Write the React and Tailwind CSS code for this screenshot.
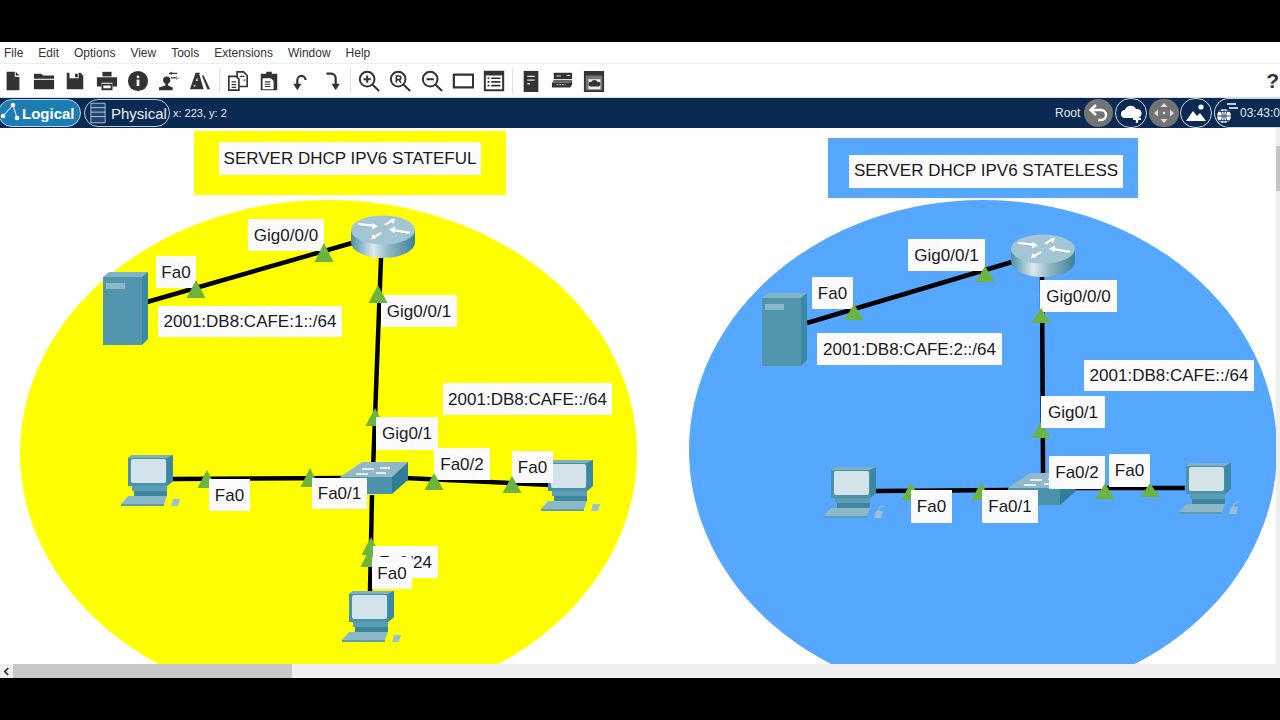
import React from 'react';

const ink = '#333333';

const toolIcons = {
  file: <path d="M5 2h9l-.2 5.400L19 7.500V22H5zM15 2l4 4h-4z" fill={ink} />,
  folder: (
    <g fill={ink}>
      <path d="M1 4h8l2 2h12v3.500H1z" />
      <path d="M1 10.700h22V21H1z" />
    </g>
  ),
  save: <path fillRule="evenodd" fill={ink} d="M3 3h3v6h10V3h2l3 3v15H3zM12 4h3v4h-3z" />,
  print: (
    <g fill={ink}>
      <path d="M7 2h10v5H7z" />
      <path fillRule="evenodd" d="M1 8h22v10h-5v-4H6v4H1z" />
      <path fillRule="evenodd" d="M6 15h12v7H6zM8 17v3h8v-3z" />
    </g>
  ),
  info: (
    <g>
      <circle cx="12" cy="12" r="11" fill={ink} />
      <circle cx="12" cy="7.500" r="1.500" fill="#fff" />
      <path d="M10.500 10.500h3v7h-3z" fill="#fff" />
    </g>
  ),
  user: (
    <g fill={ink}>
      <circle cx="9.500" cy="11" r="4" />
      <path d="M8 14h3v3l5 2v3H1v-3l7-2z" />
      <path d="M12 3h9v1.400h-9zM12 3.700l3-2v4zM14 8h8v1.400h-8zM23 8.700l-3-2v4z" />
    </g>
  ),
  flask: (
    <g fill={ink}>
      <path fillRule="evenodd" d="M7 3h5l-.8 1.500L16 21H1L6.600 4.500zM8.500 9l-1 3h2l-.3-3zM6 16a1 1 0 1 0 .1 0z" />
      <path d="M14 6h2l7 15h-3z" />
    </g>
  ),
  copy: (
    <g fill="#fff" stroke={ink} strokeWidth="1.800">
      <path d="M11 2h7l4 4v12h-11z" />
      <path d="M2 7h8l3 3v12H2z" />
      <path d="M5 13h5M5 16h5M5 19h5M14 7h5M18 11h2" strokeWidth="1.200" />
    </g>
  ),
  paste: (
    <g>
      <path d="M3 4h6V2h6v2h6v18H3z" fill={ink} />
      <path d="M5 9h9l3 3v9H5z" fill="#fff" />
      <path d="M7.500 13h6M7.500 15.500h6M7.500 18h6" stroke={ink} strokeWidth="1.200" />
    </g>
  ),
  undo: (
    <g>
      <path d="M17 11a4.500 4.500 0 0 0-9 0v6" fill="none" stroke={ink} strokeWidth="2.400" />
      <path d="M3.500 15h9L8 22z" fill={ink} />
    </g>
  ),
  redo: (
    <g>
      <path d="M6 4h5a5 5 0 0 1 5 5v8" fill="none" stroke={ink} strokeWidth="2.400" />
      <path d="M11.500 15h9L16 22z" fill={ink} />
    </g>
  ),
  zoomIn: (
    <g fill="none" stroke={ink} strokeWidth="2.200">
      <circle cx="10" cy="10" r="8" />
      <path d="M16 16l7 7M6 10h8M10 6v8" />
    </g>
  ),
  zoomReset: (
    <g fill="none" stroke={ink} strokeWidth="2.200">
      <circle cx="10" cy="10" r="8" />
      <path d="M16 16l7 7" />
      <path d="M8 14V6.500h3a2 2 0 0 1 0 4H8M11 10.500l2 3.500" strokeWidth="1.700" />
    </g>
  ),
  zoomOut: (
    <g fill="none" stroke={ink} strokeWidth="2.200">
      <circle cx="10" cy="10" r="8" />
      <path d="M16 16l7 7M6 10h8" />
    </g>
  ),
  rect: <path d="M2 5h21v14H2z" fill="none" stroke={ink} strokeWidth="2.400" />,
  list: (
    <g>
      <path d="M2 2h20v20H2z" fill="none" stroke={ink} strokeWidth="2.200" />
      <path d="M2 2h20v4H2z" fill={ink} />
      <path d="M5 9h2M9 9h10M5 13h2M9 13h10M5 17h2M9 17h10" stroke={ink} strokeWidth="1.800" />
    </g>
  ),
  server: (
    <g>
      <path d="M4 1h16v23H4z" fill={ink} />
      <path d="M8 7h8M8 11h8M8 15h3" stroke="#ddd" strokeWidth="1.500" />
    </g>
  ),
  switchBox: (
    <g>
      <path d="M3 3h20v7H3z" fill={ink} />
      <path d="M6 6.500h5M17 6h4" stroke="#ddd" strokeWidth="1.200" />
      <path d="M3 11h20l-2 3H1z" fill="#666" />
      <path d="M1 14h20l2-3v5l-2 3H1z" fill={ink} />
      <path d="M6 16h10" stroke="#aaa" strokeWidth="1.200" strokeDasharray="2 1" />
    </g>
  ),
  cloudBox: (
    <g>
      <path d="M2 2h20v21H2z" fill="#777" stroke={ink} strokeWidth="2" />
      <path d="M2 2h20v4H2z" fill={ink} />
      <path d="M6 10h13v11H6z" fill="#eee" />
      <path d="M8 18a2.500 2.500 0 0 1 1-5 4 4 0 0 1 7 0 2.500 2.500 0 0 1 1 5z" fill={ink} />
    </g>
  ),
};

const ToolIcon = ({ name }) => (
  <div className="w-[31.3px] flex justify-center">
    <svg viewBox="0 0 24 24" className="w-[22px] h-[22px]">{toolIcons[name]}</svg>
  </div>
);

const Sep = () => <div className="w-px h-[26px] bg-[#e2e2e2]" />;

const PillIcon = ({ children, gray }) => (
  <div className={gray
    ? 'w-[30px] h-[28px] rounded-full bg-[#737373] flex items-center justify-center'
    : 'w-[32px] h-[30px] rounded-full border border-[#c9d6e4] flex items-center justify-center'}>
    <svg viewBox="0 0 24 24" className="w-[24px] h-[24px]">{children}</svg>
  </div>
);

const Pc = ({ x, y }) => (
  <g transform={`translate(${x} ${y})`}>
    <path d="M8 3l4-3h41v26l-6 5H8z" fill="#4b93ab" />
    <path d="M8 3l4-3h41l-6 3z" fill="#7fb1c3" />
    <path d="M47 3l6-3v26l-6 5z" fill="#3a88a2" />
    <path d="M11 6q0-2 2-2h31q2 0 2 2v20q0 2-2 2H13q-2 0-2-2z" fill="#d4e2ea" />
    <path d="M12 31h35v5H12z" fill="#5c9db3" />
    <path d="M14 36h33v5H14z" fill="#3f879f" />
    <path d="M8 41h39l-3 8H1z" fill="#8db8c8" />
    <path d="M1 49h43v2H1z" fill="#5c9db3" />
    <path d="M53 44h7l-2 7h-7z" fill="#9cc0cf" />
    <path d="M55 44q2-6 6-5" fill="none" stroke="#d8d8a0" strokeWidth="0.800" />
  </g>
);

const ServerBox = ({ x, y }) => (
  <g transform={`translate(${x} ${y})`}>
    <path d="M0 5h39v68H0z" fill="#5195af" />
    <path d="M0 5l6-5h39l-6 5z" fill="#80b3c5" />
    <path d="M39 5l6-5v67l-6 6z" fill="#3a88a2" />
    <path d="M3 11h19v6H3z" fill="#8cb5c6" />
  </g>
);

const Router = ({ x, y, id }) => (
  <g transform={`translate(${x} ${y})`}>
    <defs>
      <linearGradient id={id} x1="0" x2="1" y1="0" y2="0">
        <stop offset="0" stopColor="#4d8fa6" />
        <stop offset="0.35" stopColor="#dbe9ee" />
        <stop offset="0.6" stopColor="#8fb6c5" />
        <stop offset="1" stopColor="#3f8097" />
      </linearGradient>
    </defs>
    <path d="M0 15v12c0 9 14 16 32 16s32-7 32-16V15z" fill={`url(#${id})`} />
    <ellipse cx="32" cy="15" rx="32" ry="14.500" fill="#a3c5d4" />
    <g stroke="#5a8296" strokeWidth="1" transform="translate(0 1)">
      <path d="M7 9l17 2M34 10l8-5M22 23l8-5M41 15l18 3" />
    </g>
    <g stroke="#fff" strokeWidth="2.400" fill="none">
      <path d="M7 9l17 2M34 10l8-5M22 23l8-5M41 15l18 3" />
    </g>
    <g fill="#fff">
      <path d="M27 11.500l-6 3 .6-6.500zM44 3.500l-1.500 5.500-4-4zM20 24.500l1.500-5.500 4 4zM38 14.500l6-3-.6 6.500z" />
    </g>
  </g>
);

const SwitchBox = ({ x, y }) => (
  <g transform={`translate(${x} ${y})`}>
    <path d="M0 17L22 2h46L52 17z" fill="#92b9c8" />
    <path d="M0 17h52v17H0z" fill="#4b93ab" />
    <path d="M52 17L68 2v18L52 34z" fill="#2f7d96" />
    <path d="M22 9h12M40 8h10M16 14h12M36 13h10" stroke="#fff" strokeWidth="1.500" />
  </g>
);

// link lines, page coordinates
const links = [
  [147, 302, 352, 243], [381, 258, 373, 470], [172, 479, 342, 478], [405, 478, 550, 485], [372, 495, 370, 592],
  [807, 323, 1012, 262], [1042, 275, 1043, 475], [875, 491, 1012, 490], [1075, 488, 1185, 488],
];

// link lights [x centre, apex y, base y]; the ones in `under` sit below the labels
const under = [
  [375, 408, 426], [207, 470, 488], [310, 468, 487], [371, 537, 555], [370, 548, 567],
  [1041, 422, 438], [911, 482, 500], [981, 482, 500],
];
const over = [
  [196, 280, 298], [324, 243, 262], [378, 285, 303], [434, 473, 490], [512, 476, 493],
  [854, 304, 320], [985, 266, 282], [1041, 308, 323], [1105, 483, 499], [1150, 483, 497],
];

const Lights = ({ items }) => (
  <svg viewBox="0 128 1280 536" className="absolute inset-0 w-[1280px] h-[536px] pointer-events-none">
    {items.map(([cx, a, b], i) => (
      <path key={i} d={`M${cx} ${a}L${cx + 9.5} ${b}H${cx - 9.5}z`} fill="#6cb33f" />
    ))}
  </svg>
);

const Note = ({ className, children, right }) => (
  <div className={`absolute bg-[#fbfbfd] flex items-center text-[17px] leading-none text-[#1a1a1a] whitespace-nowrap ${right ? 'justify-end pr-[6px]' : 'justify-center'} ${className}`}>
    {children}
  </div>
);

export default function App() {
  return (
    <div className="w-[1280px] h-[720px] overflow-hidden bg-black pt-[42px] flex flex-col font-['Liberation_Sans',Arial,sans-serif]">
      <div className="h-[21px] bg-white flex items-center gap-[15px] px-1 text-[12px] text-[#333]">
        {['File', 'Edit', 'Options', 'View', 'Tools', 'Extensions', 'Window', 'Help'].map((m) => (
          <span key={m}>{m}</span>
        ))}
      </div>

      <div className="h-[34px] bg-white flex items-center border-t border-[#eeeeee]">
        <div className="flex items-center ml-[-3px]">
          {['file', 'folder', 'save', 'print', 'info', 'user', 'flask'].map((n) => <ToolIcon key={n} name={n} />)}
        </div>
        <div className="ml-[3px]"><Sep /></div>
        <div className="flex items-center ml-[2.400px]">
          {['copy', 'paste', 'undo', 'redo'].map((n) => <ToolIcon key={n} name={n} />)}
        </div>
        <div className="ml-[2.400px]"><Sep /></div>
        <div className="flex items-center ml-[2.400px]">
          {['zoomIn', 'zoomReset', 'zoomOut', 'rect', 'list'].map((n) => <ToolIcon key={n} name={n} />)}
        </div>
        <div className="ml-[2px]"><Sep /></div>
        <div className="flex items-center ml-[2.400px]">
          {['server', 'switchBox', 'cloudBox'].map((n) => <ToolIcon key={n} name={n} />)}
        </div>
        <span className="ml-auto mr-[1px] text-[21px] font-bold text-[#333]">?</span>
      </div>

      <div className="h-[31px] bg-[#0b2a52] flex items-center border-t border-[#d8dde6] overflow-hidden">
        <div className="ml-[-2px] w-[83px] h-[28px] rounded-full bg-[#1b7db4] border border-[#b9d6e8] flex items-center">
          <svg viewBox="0 0 22 22" className="w-[22px] h-[22px] ml-[1px] shrink-0">
            <path d="M3 14L13 3l4 13" fill="none" stroke="#d6e8f3" strokeWidth="1.100" />
            <circle cx="3" cy="14" r="2.300" fill="#fff" />
            <circle cx="13" cy="3" r="2.300" fill="#fff" />
            <circle cx="17" cy="16" r="2.300" fill="#fff" />
          </svg>
          <span className="text-white font-bold text-[15px] leading-none">Logical</span>
        </div>
        <div className="ml-[3px] w-[86px] h-[28px] rounded-full border border-[#b9cfe2] flex items-center">
          <svg viewBox="0 0 18 24" className="w-[16px] h-[22px] ml-[5px] shrink-0">
            <path d="M1 1h16v22H1zM1 6h16M1 11h16M1 16h16" fill="#23466f" stroke="#b9cfe2" strokeWidth="1" />
          </svg>
          <span className="ml-[5px] text-[#e8eef5] text-[15px] leading-none">Physical</span>
        </div>
        <span className="ml-[3px] text-[11px] text-[#e3e8ef]">x: 223, y: 2</span>
        <div className="ml-auto flex items-center shrink-0 w-[225px]">
          <span className="text-[12px] text-[#e3e8ef] w-[30px]">Root</span>
          <PillIcon gray>
            <path d="M9 4L3.500 9 9 14M4 9h10a5 5 0 0 1 0 10h-3" fill="none" stroke="#fff" strokeWidth="2.400" />
          </PillIcon>
          <div className="ml-[2px]">
            <PillIcon>
              <path d="M6 17a4 4 0 0 1 0-8 6 6 0 0 1 11-1 4.500 4.500 0 0 1 2 9z" fill="#fff" />
              <path d="M18 14v8M14 18h8" stroke="#fff" strokeWidth="2.200" />
            </PillIcon>
          </div>
          <div className="ml-[2px]">
            <PillIcon gray>
              <path d="M12 2l3.500 4h-7zM12 22l3.500-4h-7zM2 12l4-3.500v7zM22 12l-4-3.500v7z" fill="#ddd" />
              <circle cx="12" cy="12" r="1.300" fill="#ddd" />
            </PillIcon>
          </div>
          <div className="ml-[1px]">
            <PillIcon>
              <path d="M2 20l7-10 4 5 3-3 6 8z" fill="#fff" />
              <circle cx="17" cy="6" r="2.600" fill="#fff" />
            </PillIcon>
          </div>
          <div className="ml-[2px] w-[66px] h-[30px] shrink-0 rounded-l-full border-y border-l border-[#c9d6e4] flex items-center">
            <svg viewBox="0 0 24 24" className="w-[24px] h-[24px] shrink-0">
              <circle cx="9" cy="15" r="7" fill="#fff" />
              <path d="M2 15h14M9 8v14M4 10.500h10M4 19.500h10M5.500 9q3.500 6 0 12M12.500 9q-3.500 6 0 12" fill="none" stroke="#0b2a52" strokeWidth="0.800" />
              <path d="M12 3h9M14 7h9" stroke="#fff" strokeWidth="1.500" />
            </svg>
            <span className="ml-[1px] text-[12px] text-[#e3e8ef] whitespace-nowrap">03:43:0</span>
          </div>
        </div>
      </div>

      <div className="relative h-[536px] bg-white overflow-hidden">
        <div className="absolute left-[20px] top-[72px] w-[617px] h-[506px] rounded-[50%] bg-[#ffff00]" />
        <div className="absolute left-[689px] top-[72px] w-[588px] h-[500px] rounded-[50%] bg-[#55a7ff]" />

        <div className="absolute left-[194px] top-[3px] w-[312px] h-[64px] bg-[#ffff00] flex items-center justify-center">
          <div className="w-[262px] h-[33px] mb-[9px] bg-[#fbfbfd] flex items-center justify-center text-[17px] text-[#1a1a1a] whitespace-nowrap">SERVER DHCP IPV6 STATEFUL</div>
        </div>
        <div className="absolute left-[828px] top-[10px] w-[310px] h-[60px] bg-[#55a7ff] flex items-center justify-center">
          <div className="w-[274px] h-[33px] mt-[6px] ml-[6px] bg-[#fbfbfd] flex items-center justify-center text-[17px] text-[#1a1a1a] whitespace-nowrap">SERVER DHCP IPV6 STATELESS</div>
        </div>

        <svg viewBox="0 128 1280 536" className="absolute inset-0 w-[1280px] h-[536px]">
          {links.map(([x1, y1, x2, y2], i) => (
            <line key={i} x1={x1} y1={y1} x2={x2} y2={y2} stroke="#000" strokeWidth="4.500" />
          ))}
          <ServerBox x={103} y={272} />
          <Router x={351} y={215} id="routerA" />
          <SwitchBox x={340} y={460} />
          <Pc x={120} y={455} />
          <Pc x={540} y={460} />
          <Pc x={341} y={591} />
          <ServerBox x={762} y={293} />
          <Router x={1011} y={234} id="routerB" />
          <SwitchBox x={1008} y={471} />
          <Pc x={823} y={467} />
          <Pc x={1178} y={463} />
        </svg>
        <Lights items={under} />

        <Note className="left-[156px] top-[128px] w-[40px] h-[32px]">Fa0</Note>
        <Note className="left-[248px] top-[91px] w-[76px] h-[32px]">Gig0/0/0</Note>
        <Note className="left-[158px] top-[178px] w-[184px] h-[31px]">2001:DB8:CAFE:1::/64</Note>
        <Note className="left-[381px] top-[167px] w-[76px] h-[32px]">Gig0/0/1</Note>
        <Note className="left-[443px] top-[255px] w-[169px] h-[32px]">2001:DB8:CAFE::/64</Note>
        <Note className="left-[376px] top-[289px] w-[62px] h-[33px]">Gig0/1</Note>
        <Note className="left-[434px] top-[320px] w-[56px] h-[32px]">Fa0/2</Note>
        <Note className="left-[512px] top-[323px] w-[41px] h-[32px]">Fa0</Note>
        <Note className="left-[209px] top-[351px] w-[41px] h-[32px]">Fa0</Note>
        <Note className="left-[312px] top-[350px] w-[55px] h-[31px]">Fa0/1</Note>
        <Note right className="left-[373px] top-[418px] w-[65px] h-[32px]">Fa0/24</Note>
        <Note className="left-[372px] top-[429px] w-[40px] h-[32px]">Fa0</Note>

        <Note className="left-[908px] top-[111px] w-[77px] h-[32px]">Gig0/0/1</Note>
        <Note className="left-[812px] top-[149px] w-[41px] h-[32px]">Fa0</Note>
        <Note className="left-[817px] top-[205px] w-[185px] h-[32px]">2001:DB8:CAFE:2::/64</Note>
        <Note className="left-[1040px] top-[152px] w-[77px] h-[32px]">Gig0/0/0</Note>
        <Note className="left-[1084px] top-[232px] w-[170px] h-[31px]">2001:DB8:CAFE::/64</Note>
        <Note className="left-[1041px] top-[268px] w-[64px] h-[32px]">Gig0/1</Note>
        <Note className="left-[1049px] top-[328px] w-[56px] h-[33px]">Fa0/2</Note>
        <Note className="left-[1109px] top-[326px] w-[41px] h-[33px]">Fa0</Note>
        <Note className="left-[911px] top-[362px] w-[41px] h-[33px]">Fa0</Note>
        <Note className="left-[982px] top-[362px] w-[56px] h-[33px]">Fa0/1</Note>

        <Lights items={over} />

        {/* vertical scrollbar, mostly cut off by the video frame */}
        <div className="absolute right-0 top-0 bottom-0 w-[4px] bg-[#eeeeee]">
          <div className="mt-[18px] h-[45px] bg-[#c4c4c4]" />
        </div>
      </div>

      <div className="h-[14px] bg-[#f0f0f0] flex items-center">
        <div className="w-[13px] flex justify-center">
          <svg viewBox="0 0 8 10" className="w-[7px] h-[9px]">
            <path d="M6 1L2 5l4 4" fill="none" stroke="#333" strokeWidth="2" />
          </svg>
        </div>
        <div className="w-[279px] h-full bg-[#c8c8c8]" />
      </div>
    </div>
  );
}
